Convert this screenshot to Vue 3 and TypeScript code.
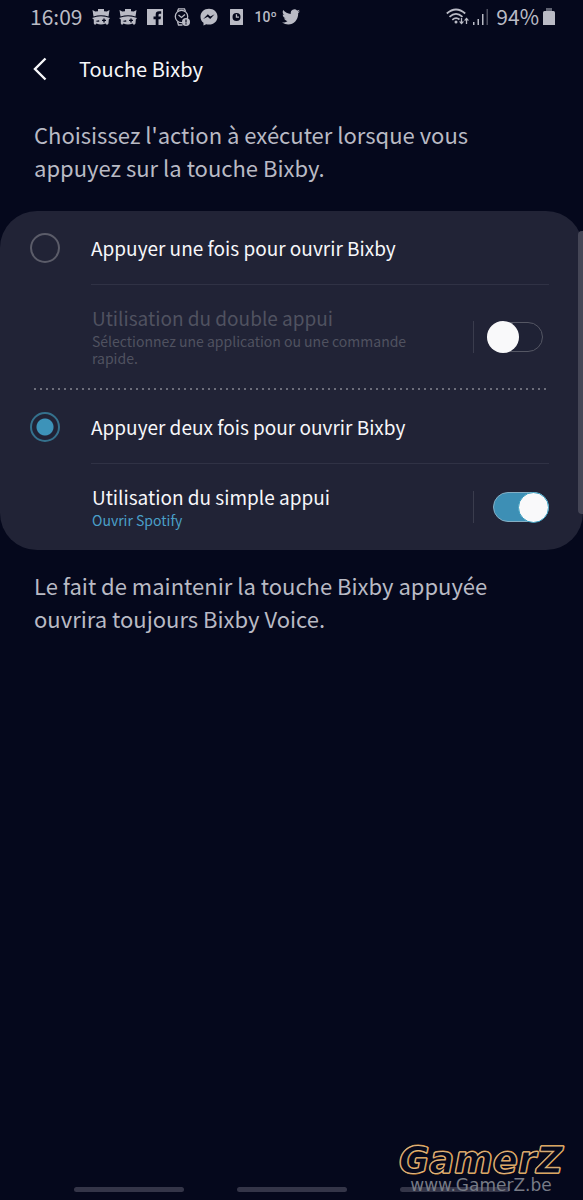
<script setup lang="ts">
import { ref } from 'vue'

const mode = ref<'single' | 'double'>('double')
const doublePress = ref(false)
const singlePress = ref(true)
</script>

<template>
  <div class="screen">
    <header class="status">
      <span class="clock">16:09</span>
      <div class="notifications">
        <svg v-for="n in 2" :key="n" class="icon" viewBox="0 0 18 18" aria-hidden="true">
          <path d="M.5 2 3.200 3.500 6 3.200V1H12V3.200L14.800 3.500 17.500 2 16.500 8.500Q9 6 1.500 8.500Z" />
          <path fill-rule="evenodd" d="M0 10Q9 6.500 18 10L16.800 11.500 16.500 15.500 15 17 13.500 15.500Q9 17.500 4.500 15.500L3 17 1.800 15.500V11.500ZM3.500 13Q5.500 14.500 7.500 13.200L7 12.300ZM10 11.700H11.300V10.400H12.700V11.700H14V13.100H12.700V14.400H11.300V13.100H10Z" />
        </svg>
        <svg class="icon" viewBox="0 0 18 18" aria-hidden="true">
          <path d="M1 1H17V17H12.500V11.300H14.600L15 8.500H12.500V7Q12.500 5.700 13.800 5.700H15.200V3.200H13Q9.700 3.200 9.700 6.500V8.500H7.500V11.300H9.700V17H1Z" />
        </svg>
        <svg class="icon" viewBox="0 0 18 18" aria-hidden="true">
          <g fill="none" stroke="currentColor" stroke-width="1.300">
            <circle cx="8.500" cy="8.500" r="6.200" />
            <path d="M4.500 3.500 5.500 .8H11.500L12.500 3.500M4.500 13.500 5.500 17H9.500M5.500 7 8.500 9.500 12 6.500" />
          </g>
          <circle cx="13" cy="14" r="4" />
          <path class="cut" d="M12.400 11.500H13.600V14.500H12.400ZM12.400 15.300H13.600V16.500H12.400Z" />
        </svg>
        <svg class="icon" viewBox="0 0 18 18" aria-hidden="true">
          <path fill-rule="evenodd" d="M9 .8C4 .8.500 4.300.500 8.700C.500 11.200 1.600 13.400 3.500 14.800V17.500L6.200 16.200C7.100 16.500 8 16.600 9 16.600C14 16.600 17.500 13.100 17.500 8.700S14 .8 9 .8ZM3.200 11 7.800 6.200 10.300 8.500 14.600 6.200 10.200 11 7.700 8.700Z" />
        </svg>
        <svg class="icon" viewBox="0 0 18 18" aria-hidden="true">
          <path fill-rule="evenodd" d="M3.500 1H15.500Q16 1 16 1.500V16.500Q16 17 15.500 17H3.500Q3 17 3 16.500V1.500Q3 1 3.500 1ZM9.500 4.900A4 4 0 1 0 9.500 12.900A4 4 0 1 0 9.500 4.900Z" />
          <path d="M8.800 6.300H10.100V8.600H12V9.800H8.800Z" />
        </svg>
        <span class="temperature">10º</span>
        <svg class="icon" viewBox="0 0 18 18" aria-hidden="true">
          <path d="M18 3.200C17.300 3.500 16.600 3.700 15.900 3.800C16.700 3.300 17.200 2.600 17.500 1.700C16.800 2.100 16 2.500 15.100 2.600A3.700 3.700 0 0 0 8.800 6C5.800 5.800 3 4.400 1.200 2.100C.3 3.800.7 5.900 2.400 7.100C1.800 7.100 1.200 6.900.7 6.600C.7 8.400 2 9.900 3.700 10.300C3.100 10.400 2.600 10.400 2 10.300C2.500 11.800 3.900 12.900 5.500 12.900C4 14.100 2 14.700 0 14.500C8 19.400 16.400 14.200 16.200 5.100C16.900 4.600 17.500 3.900 18 3.200Z" />
        </svg>
      </div>
      <div class="system">
        <svg class="wifi" viewBox="0 0 24 18" aria-hidden="true">
          <g fill="none" stroke="currentColor" stroke-width="1.800">
            <path d="M.8 5.500Q10 -2.500 19.200 5.500M3.500 8.800Q10 3 16.500 8.800M6.300 11.800Q10 8.500 13.500 11.500" />
            <path stroke-width="1.300" d="M15.500 10V15.500M20.500 16V10.500" />
          </g>
          <circle cx="10" cy="14" r="1.500" />
          <path d="M12.900 13.500H18.100L15.500 16.600ZM17.900 12.500H23.100L20.500 9.400Z" />
        </svg>
        <svg class="signal" viewBox="0 0 16 18" aria-hidden="true">
          <path d="M0 14H1.500V17H0ZM4.500 11H6V17H4.500ZM9 6H10.500V17H9Z" />
          <path opacity=".4" d="M13.500 1H15V17H13.500Z" />
        </svg>
        <span class="percent">94%</span>
        <svg class="battery" viewBox="0 0 12 18" aria-hidden="true">
          <path opacity=".5" d="M3 0H9V3H3Z" />
          <path d="M1.500 3H10.500Q12 3 12 4.500V17H0V4.500Q0 3 1.500 3Z" />
        </svg>
      </div>
    </header>

    <div class="titlebar">
      <button class="back" type="button" aria-label="Retour">
        <svg viewBox="0 0 14 24" aria-hidden="true"><path d="M12.500 1.500 2 12 12.500 22.500" /></svg>
      </button>
      <h1>Touche Bixby</h1>
    </div>

    <main>
      <p class="note intro">Choisissez l'action à exécuter lorsque vous appuyez sur la touche Bixby.</p>

      <section class="card">
        <label class="option">
          <input v-model="mode" class="radio" type="radio" name="mode" value="single" />
          <span class="option-text">Appuyer une fois pour ouvrir Bixby</span>
        </label>
        <div class="action" :class="{ disabled: mode !== 'single' }">
          <label class="action-text" for="double-press">
            <span class="action-title">Utilisation du double appui</span>
            <span class="summary">Sélectionnez une application ou une commande rapide.</span>
          </label>
          <div class="toggle-cell">
            <input id="double-press" v-model="doublePress" class="toggle" type="checkbox" role="switch" :disabled="mode !== 'single'" />
          </div>
        </div>
        <div class="dots"></div>
        <label class="option">
          <input v-model="mode" class="radio" type="radio" name="mode" value="double" />
          <span class="option-text">Appuyer deux fois pour ouvrir Bixby</span>
        </label>
        <div class="action" :class="{ disabled: mode !== 'double' }">
          <label class="action-text" for="single-press">
            <span class="action-title">Utilisation du simple appui</span>
            <span class="summary">Ouvrir Spotify</span>
          </label>
          <div class="toggle-cell">
            <input id="single-press" v-model="singlePress" class="toggle" type="checkbox" role="switch" :disabled="mode !== 'double'" />
          </div>
        </div>
        <div class="scrollbar"></div>
      </section>

      <p class="note outro">Le fait de maintenir la touche Bixby appuyée ouvrira toujours Bixby Voice.</p>
    </main>

    <footer class="gestures"><i></i><i></i><i></i></footer>

    <div class="watermark">
      <span class="brand">GamerZ</span>
      <span class="site">www.GamerZ.be</span>
    </div>
  </div>
</template>

<style>
body {
  margin: 0;
  background: #05081c;
}
</style>

<style scoped>
.screen {
  position: relative;
  box-sizing: border-box;
  min-height: 100vh;
  display: flex;
  flex-direction: column;
  background: #05081c;
  color: #f7f7fa;
  font-family: "Noto Sans CJK SC", "Noto Sans", sans-serif;
}

.status {
  display: flex;
  align-items: center;
  height: 34px;
  padding: 0 28px 0 30px;
  color: #babbc5;
  font-size: 21px;
  line-height: 32px;
}
.status svg {
  display: block;
  height: 18px;
  flex: none;
  fill: currentColor;
}
.clock,
.percent { padding-bottom: 2px; }
.notifications {
  display: flex;
  align-items: center;
  gap: 9px;
  margin-left: 10px;
}
.icon { width: 18px; }
.status .cut { fill: #05081c; }
.temperature {
  width: 19px;
  font-family: Roboto, sans-serif;
  font-size: 14px;
  font-weight: 500;
  white-space: nowrap;
}
.system {
  display: flex;
  align-items: center;
  margin-left: auto;
}
.wifi { width: 24px; margin-right: 3px; }
.signal { width: 16px; margin-right: 7px; }
.battery { width: 12px; margin-left: 4px; }

.titlebar {
  display: flex;
  align-items: center;
  height: 70px;
  padding: 0 33px;
}
.back {
  width: 46px;
  height: 46px;
  padding: 0;
  border: 0;
  background: none;
  display: flex;
  align-items: center;
}
.back svg {
  width: 14px;
  height: 24px;
  fill: none;
  stroke: #f7f7fa;
  stroke-width: 2.4;
}
h1 {
  margin: 0;
  font-size: 20px;
  font-weight: 400;
  line-height: 30px;
}

main { flex: 1; }
.note {
  margin: 0;
  padding: 0 84px 0 34px;
  color: #b9bac4;
  font-size: 22px;
  line-height: 33px;
}
.intro { padding-top: 14px; padding-bottom: 27px; }
.outro { padding-top: 19px; }

.card {
  position: relative;
  border-radius: 37px;
  background: #212336;
}
.option {
  display: flex;
  align-items: stretch;
  padding-right: 34px;
}
.option-text {
  flex: 1;
  border-bottom: 1px solid #303245;
  font-size: 19px;
  line-height: 73px;
}
.radio {
  appearance: none;
  box-sizing: border-box;
  align-self: center;
  flex: none;
  width: 30px;
  height: 30px;
  margin: 0 31px 0 30px;
  border: 2px solid #5b5c69;
  border-radius: 50%;
}
.radio:checked {
  border-color: #35718d;
  background: radial-gradient(circle, #3d93b9 8px, transparent 9px);
}

.action {
  display: flex;
  align-items: center;
  padding: 21px 34px 21px 92px;
}
.action-text {
  flex: 1;
  display: flex;
  flex-direction: column;
  gap: 3px;
  padding-right: 60px;
}
.action-title {
  font-size: 19px;
  line-height: 24px;
}
.summary {
  color: #4a9fc8;
  font-size: 14px;
  line-height: 17px;
}
.disabled .action-title,
.disabled .summary { color: #505260; }

.toggle-cell {
  display: flex;
  padding-left: 13px;
  border-left: 1px solid #3a3c4d;
}
.toggle {
  appearance: none;
  display: flex;
  align-items: center;
  width: 62px;
  height: 32px;
  margin: 0;
}
.toggle::before {
  content: "";
  box-sizing: border-box;
  width: 56px;
  height: 30px;
  border: 1px solid #555764;
  border-radius: 15px;
  background: #1f2235;
}
.toggle::after {
  content: "";
  width: 32px;
  height: 32px;
  margin-left: -56px;
  border-radius: 50%;
  background: #f9f9fa;
}
.toggle:checked { justify-content: flex-end; }
.toggle:checked::before {
  border-color: #84aec4;
  background: #3d8fb5;
}
.toggle:checked::after {
  box-sizing: border-box;
  width: 31px;
  height: 31px;
  margin-left: -31px;
  border: 1px solid #3d9fc0;
}

.dots {
  height: 2px;
  margin: 0 34px 0 32px;
  background: radial-gradient(circle, #6c6d7a 1px, transparent 1px) 0 0 / 6px 2px repeat-x;
}
.scrollbar {
  position: absolute;
  top: 20px;
  right: 0;
  bottom: 36px;
  width: 5px;
  border-radius: 4px 0 0 4px;
  background: #454656;
}

.gestures {
  display: flex;
  justify-content: center;
  gap: 53px;
  padding-bottom: 8px;
}
.gestures i {
  width: 110px;
  height: 5px;
  border-radius: 3px;
  background: #343548;
}

.watermark {
  position: absolute;
  right: 20px;
  bottom: 6px;
  display: flex;
  flex-direction: column;
  align-items: center;
  font-family: "DejaVu Sans", sans-serif;
}
.brand {
  color: #05081c;
  font-size: 37px;
  font-style: italic;
  font-weight: 700;
  line-height: 32px;
  -webkit-text-stroke: 1px #dfb783;
  text-shadow: 1px 0 #d98a2b, -1px 0 #d98a2b, 0 1px #d98a2b, 0 -1px #d98a2b;
}
.site {
  color: #777b86;
  font-size: 17px;
  line-height: 17px;
}
</style>
